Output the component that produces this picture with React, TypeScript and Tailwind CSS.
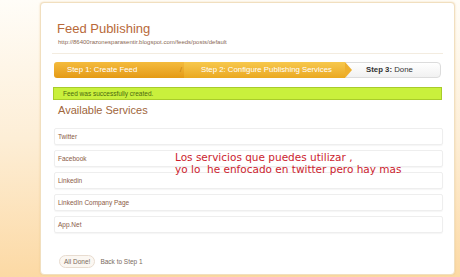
const services = ["Twitter", "Facebook", "Linkedin", "LinkedIn Company Page", "App.Net"];

const App = () => {
  return (
    <div className="relative w-[460px] h-[277px] overflow-hidden bg-gradient-to-b from-[#fffdf8] via-[#fdeed6] to-[#fcd9a4] font-['Liberation_Sans',Arial,sans-serif]">
      <div className="absolute left-[40px] top-[2px] w-[415px] h-[273px] rounded-[4px] border border-[#f1dfbf] bg-white shadow-[0_0_2px_rgba(230,190,130,0.6)] px-[13px] pt-[18px]">
        <h1 className="text-[13px] leading-[15px] text-[#b8693a] ml-[3px]">Feed Publishing</h1>
        <div className="text-[6px] leading-[8px] text-[#8a6a55] ml-[4px] mt-[2px]">
          http://86400razonesparasentir.blogspot.com/feeds/posts/default
        </div>
        <div className="h-px bg-[#f3ece0] mt-[7px] -mx-[2px]" />

        <div className="mt-[8px] flex h-[16px] text-[7.8px] leading-[16px]">
          <div className="relative w-[130px] bg-gradient-to-b from-[#f4bb3c] to-[#e49a12] rounded-l-[3px] text-white pl-[13px]">
            Step 1: Create Feed
            <span className="absolute right-[2px] top-[4px] text-[#c57f0e] text-[8px] leading-[8px]">/</span>
          </div>
          <div className="relative w-[161px] bg-gradient-to-b from-[#f7c84c] to-[#eaa91f] text-white pl-[17px]">
            Step 2: Configure Publishing Services
            <span className="absolute -right-[7px] top-0 w-0 h-0 border-y-[8px] border-y-transparent border-l-[7px] border-l-[#eeb02e]" />
          </div>
          <div className="flex-1 bg-gradient-to-b from-white to-[#f1f1f1] border border-[#dcdcdc] rounded-r-[4px] text-[#333] pl-[20px] leading-[14px]">
            <span className="font-bold">Step 3:</span> Done
          </div>
        </div>

        <div className="mt-[9px] -mx-[1px] h-[13px] bg-[#c9f03c] border border-[#a8cc2a] text-[6.5px] leading-[11px] text-[#4a6a10] pl-[9px]">
          Feed was successfully created.
        </div>

        <h2 className="mt-[3px] ml-[4px] text-[11px] leading-[14px] text-[#a0663c]">Available Services</h2>

        <div className="mt-[11px] flex flex-col gap-[5px] -mr-[2px]">
          {services.map((s) => (
            <div
              key={s}
              className="h-[17px] border border-[#eeeeee] rounded-[2px] shadow-[0_1px_1px_rgba(0,0,0,0.04)] text-[6.5px] leading-[15px] text-[#8a5a45] pl-[3px]"
            >
              {s}
            </div>
          ))}
        </div>

        <div className="mt-[22px] ml-[5px] flex items-center gap-[5px] text-[6.5px] text-[#7a6a60]">
          <span className="px-[4px] h-[13px] leading-[11px] rounded-full border border-[#e8dcd0] bg-[#fbf7f2]">All Done!</span>
          <span>Back to Step 1</span>
        </div>

        <div className="absolute left-[134px] top-[148px] text-[10.5px] leading-[12px] text-[#cc1d2e] font-['DejaVu_Sans',Verdana,sans-serif] whitespace-pre">
          {"Los servicios que puedes utilizar ,\nyo lo  he enfocado en twitter pero hay mas"}
        </div>
      </div>
    </div>
  );
};

export default App;
